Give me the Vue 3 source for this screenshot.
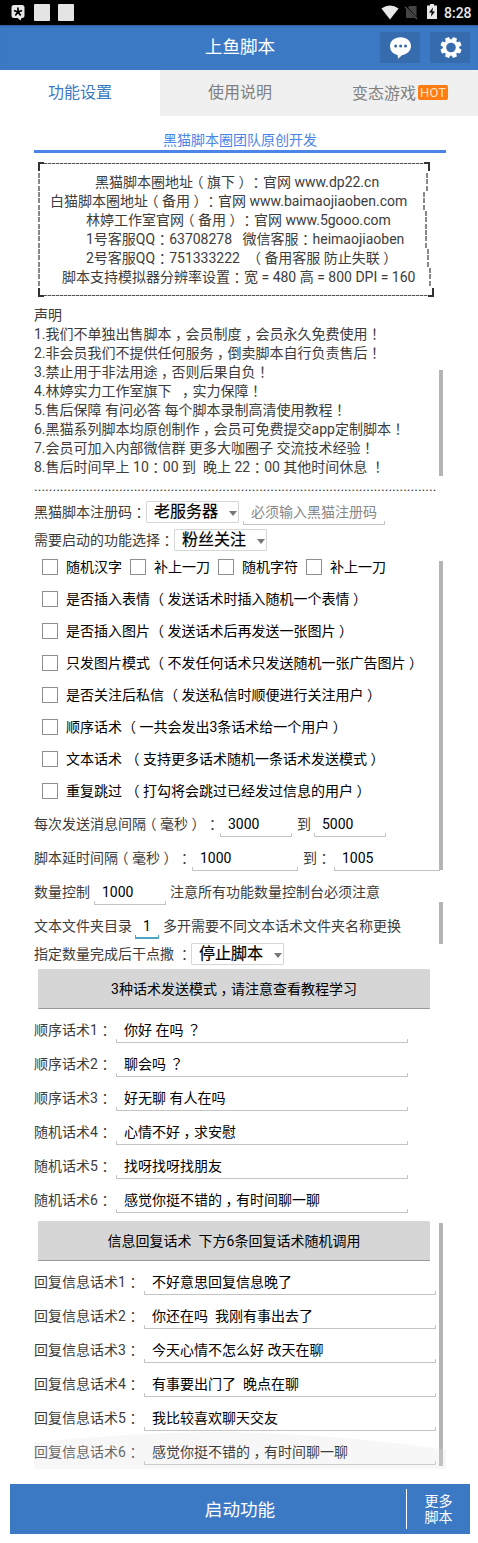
<script setup>
import { h } from 'vue'

// Full-width marks sit in the middle of their cell, so they get their own class.
const kinds = { '（': 'half', '）': 'half', '，': 'half', '：': 'half', '！': 'half', '？': 'ask' }
const Txt = ({ t }) =>
  t.split(/([，：！？（）])/).filter(Boolean).map((s) =>
    kinds[s] ? h('span', { class: 'mark ' + kinds[s] }, s) : s
  )
Txt.props = ['t']

const contacts = [
  { t: '黑猫脚本圈地址（旗下）：官网 www.dp22.cn', x: 57, bar: 390 },
  { t: '白猫脚本圈地址（备用）：官网 www.baimaojiaoben.com', x: 12, bar: 387 },
  { t: '林婷工作室官网（备用）：官网 www.5gooo.com', x: 48, bar: 389 },
  { t: '1号客服QQ：63708278   微信客服：heimaojiaoben', x: 48, bar: 389 },
  { t: '2号客服QQ：751333222   （备用客服 防止失联）', x: 48, bar: 391 },
  { t: '脚本支持模拟器分辨率设置：宽 = 480 高 = 800 DPI = 160', x: 24, bar: 393 }
]
const notes = [
  '声明',
  '1.我们不单独出售脚本，会员制度，会员永久免费使用！',
  '2.非会员我们不提供任何服务，倒卖脚本自行负责售后！',
  '3.禁止用于非法用途，否则后果自负！',
  '4.林婷实力工作室旗下  ，实力保障！',
  '5.售后保障 有问必答 每个脚本录制高清使用教程！',
  '6.黑猫系列脚本均原创制作，会员可免费提交app定制脚本！',
  '7.会员可加入内部微信群 更多大咖圈子 交流技术经验！',
  '8.售后时间早上 10：00 到  晚上 22：00 其他时间休息 ！'
]
const dots = '.'.repeat(109)
const quick = ['随机汉字', '补上一刀', '随机字符', '补上一刀']
const options = [
  '是否插入表情 （发送话术时插入随机一个表情）',
  '是否插入图片 （发送话术后再发送一张图片）',
  '只发图片模式 （不发任何话术只发送随机一张广告图片）',
  '是否关注后私信 （发送私信时顺便进行关注用户）',
  '顺序话术 （一共会发出3条话术给一个用户）',
  '文本话术  （支持更多话术随机一条话术发送模式）',
  '重复跳过  （打勾将会跳过已经发过信息的用户）'
]
const scripts = [
  ['顺序话术1：', '你好 在吗 ？'],
  ['顺序话术2：', '聊会吗 ？'],
  ['顺序话术3：', '好无聊 有人在吗'],
  ['随机话术4：', '心情不好，求安慰'],
  ['随机话术5：', '找呀找呀找朋友'],
  ['随机话术6：', '感觉你挺不错的，有时间聊一聊']
]
const replyTitle = '信息回复话术  下方6条回复话术随机调用'
const replies = [
  ['回复信息话术1：', '不好意思回复信息晚了'],
  ['回复信息话术2：', '你还在吗  我刚有事出去了'],
  ['回复信息话术3：', '今天心情不怎么好 改天在聊'],
  ['回复信息话术4：', '有事要出门了  晚点在聊'],
  ['回复信息话术5：', '我比较喜欢聊天交友'],
  ['回复信息话术6：', '感觉你挺不错的，有时间聊一聊']
]
</script>

<template>
  <div class="screen">
    <div class="status">
      <svg class="badge" width="14" height="16" viewBox="0 0 14 16">
        <path fill="#e8e8e8" d="M3 0H11Q13.500 0 13.500 2.500V10.500Q13.500 13 11 13H10.500L9.500 15.500L6.500 13H3Q.500 13 .500 10.500V2.500Q.500 0 3 0Z" />
        <path stroke="#000" stroke-width="1.700" d="M7 2.500V7M3 5.500L7 7L11 5.500M4.300 10.500L7 7L9.700 10.500" fill="none" />
      </svg>
      <i class="sq"></i><i class="sq"></i>
      <span class="grow"></span>
      <svg width="18" height="15" viewBox="0 0 18 15"><path fill="#e8e8e8" d="M.400 3.500Q9-2.600 17.600 3.500L9 14.500Z" /></svg>
      <svg class="sim" width="13" height="15" viewBox="0 0 13 15">
        <path fill="#444" d="M4.500 1H11.500V13H1V4.500Z" />
        <path stroke="#000" stroke-width="2" d="M.500 1.500L12 14" />
        <path stroke="#5a5a5a" stroke-width="1.200" d="M0 2L12 14" />
      </svg>
      <svg class="bat" width="10" height="15" viewBox="0 0 10 15">
        <path fill="#e8e8e8" d="M3 0H7V1.500H10V15H0V1.500H3Z" />
        <path fill="#000" d="M6 3.500L2 8.500H4.600L4 12.500L8 7.500H5.400Z" />
      </svg>
      <span class="clock">8:28</span>
    </div>

    <div class="header">
      <h1>上鱼脚本</h1>
      <div class="tools">
        <button class="tool">
          <svg width="40" height="31" viewBox="0 0 40 31">
            <path fill="#fff" d="M20.500 5.200C26.700 5.200 31 9 31 13.900C31 19 26.500 22.300 22.300 23L18 26.800L17.600 22.900C13 22 10 18.500 10 13.900C10 9 14.500 5.200 20.500 5.200Z" />
            <circle cx="15.700" cy="14" r="1.500" fill="#3366a8" /><circle cx="20.600" cy="14" r="1.500" fill="#3366a8" /><circle cx="25.500" cy="14" r="1.500" fill="#3366a8" />
          </svg>
        </button>
        <button class="tool">
          <svg width="40" height="31" viewBox="0 0 40 31">
            <g transform="translate(21 15.500)">
              <circle r="6.500" fill="none" stroke="#fff" stroke-width="3.400" />
              <g fill="#fff">
                <path v-for="a in 8" :key="a" :transform="`rotate(${a * 45 + 22.5})`" d="M-2.600 -7.500L-2 -10.600H2L2.600 -7.500Z" />
              </g>
            </g>
          </svg>
        </button>
      </div>
    </div>

    <div class="tabs">
      <div class="tab on">功能设置</div>
      <div class="tab">使用说明</div>
      <div class="tab last">变态游戏<b>HOT</b></div>
    </div>

    <div class="content">
      <div class="caption">黑猫脚本圈团队原创开发</div>

      <div class="frame">
        <div class="edge top"><i></i><i></i></div>
        <div v-for="c in contacts" :key="c.t" class="contact" :style="{ width: c.bar + 'px', paddingLeft: c.x + 'px' }"><Txt :t="c.t" /></div>
        <div class="edge bottom"><i></i><i></i></div>
      </div>

      <div class="notes"><p v-for="n in notes" :key="n"><Txt :t="n" /></p></div>
      <div class="dots">{{ dots }}</div>

      <div class="row pick">
        <span class="l112"><Txt t="黑猫脚本注册码：" /></span>
        <span class="select">老服务器</span>
        <span class="field hint w142">必须输入黑猫注册码</span>
      </div>
      <div class="row pick two">
        <span class="l140"><Txt t="需要启动的功能选择：" /></span>
        <span class="select">粉丝关注</span>
      </div>

      <div class="checks lead">
        <span v-for="(q, i) in quick" :key="i" class="check q"><i></i>{{ q }}</span>
      </div>
      <div v-for="o in options" :key="o" class="checks"><span class="check"><i></i><span><Txt :t="o" /></span></span></div>

      <div class="row">
        <span class="l186"><Txt t="每次发送消息间隔（毫秒） ：" /></span><span class="field w72">3000</span>
        <span class="mid a">到</span><span class="field w72">5000</span>
      </div>
      <div class="row">
        <span class="l158"><Txt t="脚本延时间隔（毫秒） ：" /></span><span class="field w106">1000</span>
        <span class="mid b"><Txt t="到：" /></span><span class="field w106">1005</span>
      </div>
      <div class="row">
        <span class="l60">数量控制</span><span class="field w72">1000</span>
        <span class="after">注意所有功能数量控制台必须注意</span>
      </div>
      <div class="row">
        <span class="l101">文本文件夹目录</span><span class="field focus">1</span>
        <span class="after">多开需要不同文本话术文件夹名称更换</span>
      </div>
      <div class="row pick stop">
        <span class="l157"><Txt t="指定数量完成后干点撒 ：" /></span>
        <span class="select">停止脚本</span>
      </div>

      <button class="wide"><Txt t="3种话术发送模式，请注意查看教程学习" /></button>
      <div v-for="s in scripts" :key="s[0]" class="row">
        <span class="l82"><Txt :t="s[0]" /></span><span class="field w292"><Txt :t="s[1]" /></span>
      </div>
      <button class="wide">{{ replyTitle }}</button>
      <div v-for="s in replies" :key="s[0]" class="row">
        <span class="l110"><Txt :t="s[0]" /></span><span class="field w292"><Txt :t="s[1]" /></span>
      </div>

      <i class="bar b1"></i><i class="bar b2"></i><i class="bar b3"></i><i class="bar b4"></i>
      <svg class="glow" width="412" height="37" viewBox="0 0 412 37"><path d="M0 11Q85 1 180 0Q300 1 412 18V37H0Z" fill="#e1e1e1" fill-opacity=".27" /></svg>
    </div>

    <div class="footer">
      <div class="start">启动功能</div>
      <div class="more">更多<br />脚本</div>
    </div>
  </div>
</template>

<style>
body { background: #fff; }
.mark { line-height: 0; }
.mark.half { font-feature-settings: "halt"; padding: 0 3.5px; }
.mark.ask { font-family: "Noto Sans CJK TC", sans-serif; }
</style>

<style scoped>
.screen { width: 478px; height: 1543px; overflow: hidden; background: #fff; color: #3c3c3c; font: 14px/19px Roboto, "Noto Sans CJK SC", sans-serif; white-space: pre-wrap; text-spacing-trim: space-all; }
.screen * { box-sizing: border-box; }
.screen div { white-space: nowrap; }
i { font-style: normal; display: block; flex: none; }
svg { display: block; flex: none; }
.status { height: 25px; background: #000; display: flex; align-items: flex-start; padding: 5px 6px 0 11px; color: #e8e8e8; }
.sq { width: 16px; height: 17px; background: #e4e4e4; border-radius: 1px; margin-left: 8px; margin-top: -1px; }
.sq:nth-of-type(1) { margin-left: 9px; }
.grow { flex: 1; }
.sim { margin-left: 6px; }
.bat { margin-left: 9px; margin-top: -1px; }
.clock { font-size: 14px; line-height: 17px; margin-left: 7px; font-weight: 500; width: 28px; }
.header { height: 45px; background: #3c79c4; box-shadow: inset 0 2px 2px -1px #2a5a98; position: relative; color: #fff; }
h1 { margin: 0; font-size: 17.600px; line-height: 45px; font-weight: 400; text-align: center; padding-left: 2px; }
.tools { position: absolute; right: 8px; top: 7px; display: flex; gap: 10px; }
.tool { width: 40px; height: 31px; border: 0; padding: 0; background: #366bad; }
.tabs { height: 46px; display: flex; font-size: 16px; line-height: 45px; color: #808080; background: #f0f0f0; }
.tab { width: 160px; flex: none; text-align: center; }
.on { background: #fff; color: #3c79c4; }
.last { display: flex; align-items: center; padding-left: 32px; line-height: 47px; }
b { background: #ff7d12; color: #ffe3c8; font: 13px/15px Roboto, sans-serif; width: 30px; height: 15px; border-radius: 2px; margin: -1px 0 0 2px; text-align: center; }
.content { position: relative; margin: 0 32px 0 34px; height: 1353px; }
.caption { height: 37px; padding-top: 15px; text-align: center; color: #4a86e8; border-bottom: 3px solid #4a86e8; }
.frame { margin: 9px 0 0 4px; }
.edge { height: 11px; display: flex; justify-content: space-between; width: 392px; background: repeating-linear-gradient(90deg, #555 0 3px, #bbb 3px 4px) 6px 1px / 381px 1px no-repeat; }
.edge i { width: 6px; height: 9px; border: 2px solid #333; border-right: 0; border-bottom: 0; }
.edge i:last-child { border-left: 0; border-right: 2px solid #333; }
.edge.bottom { width: 396px; height: 10px; background-position: 6px 8px; background-size: 385px 1px; align-items: flex-end; }
.edge.bottom i { border-top: 0; border-bottom: 2px solid #333; }
.contact { height: 19px; background: repeating-linear-gradient(180deg, #888 0 5px, transparent 5px 6.333px) 0 0 / 2px 100% no-repeat, repeating-linear-gradient(180deg, #888 0 5px, transparent 5px 6.333px) 100% 0 / 2px 100% no-repeat; }
.frame .contact { white-space: pre; }
.notes { margin-top: 9px; }
.notes p { margin: 0; height: 19px; white-space: pre; }
.dots { height: 19px; }
.row { height: 34px; display: flex; align-items: center; }
.row > span { flex: none; white-space: pre; }
.pick { height: 28px; margin-top: 2px; }
.pick.two { margin-top: 0; }
.select { width: 93px; height: 22px; border: 1px solid #d6d6d6; border-radius: 1px; color: #000; font-size: 16px; line-height: 19px; padding-left: 7px; position: relative; -webkit-text-stroke: .2px #000; }
.select::after { content: ""; position: absolute; right: 1px; top: 9px; border: 4px solid transparent; border-top: 5px solid #777; border-bottom: 0; }
.field { height: 25px; padding-left: 8px; line-height: 25px; color: #000; border-bottom: 1px solid #c4c4c4; position: relative; }
.field::before, .field::after { content: ""; position: absolute; bottom: 0; height: 3px; width: 1px; background: #c4c4c4; left: 0; }
.field::after { left: auto; right: 0; }
.hint { color: #888; margin-left: 4px; }
.focus { width: 24px; border-bottom: 2px solid #4ba6c6; }
.focus::before, .focus::after { width: 1px; background: #4ba6c6; height: 2px; }
.w72 { width: 72px; } .w106 { width: 106px; } .w142 { width: 142px; } .w292 { width: 292px; }
.l60 { width: 60px; } .l82 { width: 82px; } .l101 { width: 101px; } .l110 { width: 110px; } .l112 { width: 112px; }
.l140 { width: 140px; } .l157 { width: 157px; } .l158 { width: 158px; } .l186 { width: 186px; }
.a { width: 22px; padding-left: 5px; } .b { width: 36px; padding-left: 5px; }
.after { margin-left: 4px; }
.checks { height: 32px; display: flex; padding-left: 8px; color: #000; }
.lead { margin-top: -3px; }
.check { display: flex; align-items: center; white-space: pre; }
.q { width: 88px; }
.check i { width: 16px; height: 16px; border: 1px solid #8e8e8e; margin-right: 8px; }
.stop { height: 22px; margin-top: 0; }
.wide { display: block; width: 392px; height: 40px; margin: 4px 0 4px 4px; border: 0; border-bottom: 1px solid #999; border-radius: 1px; background: #d6d6d6; color: #000; font: inherit; padding: 2px 0 0; white-space: pre; }
.bar { position: absolute; left: 405px; width: 4px; background: #b4b4b4; }
.b1 { top: 254px; height: 106px; } .b2 { top: 445px; height: 309px; } .b3 { top: 786px; height: 42px; } .b4 { top: 1107px; height: 243px; }
.glow { position: absolute; left: 0; top: 1316px; }
.footer { height: 50px; margin: 15px 8px 0 10px; background: #3c79c4; color: #fff; display: flex; align-items: center; }
.start { width: 396px; padding-left: 64px; text-align: center; font-size: 17.600px; height: 40px; line-height: 42px; }
.more { width: 64px; height: 40px; border-left: 1px solid #fff; text-align: center; line-height: 16px; padding-top: 4px; }
</style>
